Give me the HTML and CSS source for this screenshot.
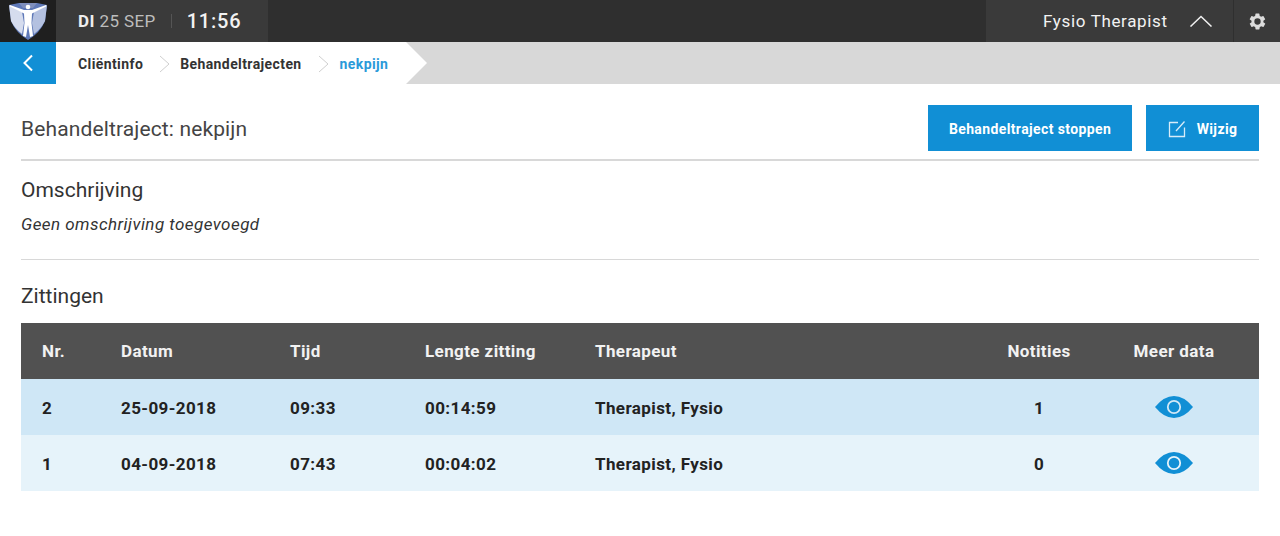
FILE: index.html
```html
<!DOCTYPE html>
<html lang="nl">
<head>
<meta charset="UTF-8" />
<meta name="viewport" content="width=device-width, initial-scale=1" />
<title>Behandeltraject: nekpijn</title>
<link rel="stylesheet" href="styles.css">
</head>
<body>
  <header class="topbar">
    <div class="logo">
      <svg width="38" height="37" viewBox="0 0 38 37">
        <path d="M0 2 L10 0 L28 0 L38 2 L36 18 Q31 30 19 37 Q7 30 2 18 Z" fill="#5f79b8"/>
        <path d="M0 2 L13 9 L15 20 L13 31 Q6 26 2 18 Z" fill="#d5dcee"/>
        <path d="M38 2 L25 9 L23 20 L25 31 Q32 26 36 18 Z" fill="#b4c1e0"/>
        <path d="M10 0 L28 0 L24 5 L14 5 Z" fill="#7f8fbd"/>
        <circle cx="19" cy="4" r="2.300" fill="#fff"/>
        <path d="M1 2 L15 7 L23 7 L37 2 L37 3.500 L23 10.500 L22.500 20 L24 33 L21 34 L19 22 L17 34 L14 33 L15.500 20 L15 10.500 L1 3.500 Z" fill="#fff"/>
      </svg>
    </div>
    <div class="clock">
      <span class="date"><b>DI</b> 25 SEP</span>
      <span class="time">11:56</span>
    </div>
    <div class="spacer"></div>
    <div class="user">
      <span>Fysio Therapist</span>
      <svg width="24" height="12" viewBox="0 0 24 12"><path d="M1.5 11.5 L12 1.5 L22.500 11.5" fill="none" stroke="#f0f0f0" stroke-width="1.500"/></svg>
    </div>
    <div class="settings">
      <svg width="19" height="19" viewBox="0 0 24 24"><path fill="#dcdcdc" fill-rule="evenodd" d="M19.4 13a7.600 7.600 0 0 0 0-2l2.100-1.600a.5.5 0 0 0 .1-.6l-2-3.500a.5.5 0 0 0-.6-.2l-2.500 1a7.500 7.500 0 0 0-1.700-1L14.400 2.400a.5.5 0 0 0-.5-.4h-4a.5.5 0 0 0-.5.4L9 5.100a7.500 7.500 0 0 0-1.700 1l-2.500-1a.5.5 0 0 0-.6.2l-2 3.500a.5.5 0 0 0 .1.600L4.500 11a7.600 7.600 0 0 0 0 2l-2.100 1.600a.5.5 0 0 0-.1.6l2 3.500a.5.5 0 0 0 .6.2l2.500-1a7.500 7.500 0 0 0 1.700 1l.4 2.700a.5.5 0 0 0 .5.4h4a.5.5 0 0 0 .5-.4l.4-2.700a7.500 7.500 0 0 0 1.700-1l2.500 1a.5.5 0 0 0 .6-.2l2-3.500a.5.5 0 0 0-.1-.6zM12 16a4 4 0 1 1 0-8 4 4 0 0 1 0 8z"/></svg>
    </div>
  </header>

  <nav class="crumbbar">
    <a class="back">
      <svg width="12" height="18" viewBox="0 0 12 18"><path d="M10 1.500 L2.500 9 L10 16.500" fill="none" stroke="#fff" stroke-width="2"/></svg>
    </a>
    <div class="crumbs">
      <span>Cliëntinfo</span>
      <svg class="sep" width="11" height="18" viewBox="0 0 11 18"><path d="M1 1 L10 9 L1 17" fill="none" stroke="#cfcfcf" stroke-width="1"/></svg>
      <span>Behandeltrajecten</span>
      <svg class="sep" width="11" height="18" viewBox="0 0 11 18"><path d="M1 1 L10 9 L1 17" fill="none" stroke="#cfcfcf" stroke-width="1"/></svg>
      <span class="current">nekpijn</span>
    </div>
  </nav>

  <main class="content">
    <div class="title-row">
      <h1>Behandeltraject: nekpijn</h1>
      <div class="actions">
        <button class="btn btn-stop">Behandeltraject stoppen</button>
        <button class="btn btn-edit">
          <svg width="18" height="18" viewBox="0 0 18 18"><path d="M10 2.500 H1.500 V16.500 H16.500 V7.500 M8 11 L16.500 1.500" fill="none" stroke="#d7ecf9" stroke-width="1.300"/></svg>
          Wijzig
        </button>
      </div>
    </div>

    <section class="description">
      <h2>Omschrijving</h2>
      <p>Geen omschrijving toegevoegd</p>
    </section>

    <h2 class="sessions-title">Zittingen</h2>
    <table class="sessions">
      <thead>
        <tr>
          <th class="c-nr">Nr.</th>
          <th class="c-date">Datum</th>
          <th class="c-time">Tijd</th>
          <th class="c-length">Lengte zitting</th>
          <th>Therapeut</th>
          <th class="c-notes">Notities</th>
          <th class="c-more">Meer data</th>
        </tr>
      </thead>
      <tbody>
        <tr>
          <td>2</td><td>25-09-2018</td><td>09:33</td><td>00:14:59</td><td>Therapist, Fysio</td>
          <td class="c-notes">1</td>
          <td class="c-more"><svg class="eye" width="38" height="22" viewBox="0 0 38 22"><path fill="#118fd5" fill-rule="evenodd" d="M0 11 Q9 0 19 0 Q29 0 38 11 Q29 22 19 22 Q9 22 0 11Z"/><circle cx="19" cy="11" r="6.200" fill="none" stroke="#d2e8f6" stroke-width="1.800"/></svg></td>
        </tr>
        <tr>
          <td>1</td><td>04-09-2018</td><td>07:43</td><td>00:04:02</td><td>Therapist, Fysio</td>
          <td class="c-notes">0</td>
          <td class="c-more"><svg class="eye" width="38" height="22" viewBox="0 0 38 22"><path fill="#118fd5" fill-rule="evenodd" d="M0 11 Q9 0 19 0 Q29 0 38 11 Q29 22 19 22 Q9 22 0 11Z"/><circle cx="19" cy="11" r="6.200" fill="none" stroke="#e6f3fa" stroke-width="1.800"/></svg></td>
        </tr>
      </tbody>
    </table>
  </main>
</body>
</html>
```

FILE: styles.css
```css
body {
  font-family: Roboto, 'Liberation Sans', sans-serif;
  background: #fff;
  color: #333;
  margin: 0;
}
.topbar {
  display: flex;
  height: 42px;
  background: #2f2f2f;
  color: #f2f2f2;
}
.logo {
  width: 56px;
  background: #1f1f1f;
  display: flex;
  justify-content: center;
  padding-top: 3px;
  box-sizing: border-box;
}
.clock {
  width: 212px;
  background: #3a3a3a;
  display: flex;
  align-items: center;
  padding-left: 22px;
  box-sizing: border-box;
}
.date {
  font-size: 17px;
  letter-spacing: 0.4px;
  color: #bdbdbd;
  padding-right: 15px;
  border-right: 1px solid #555;
  line-height: 14px;
}
.date b {
  color: #eee;
  font-weight: 700;
}
.time {
  font-size: 20px;
  font-weight: 500;
  letter-spacing: 0.8px;
  margin-left: 15px;
}
.spacer {
  flex: 1;
}
.user {
  width: 247px;
  background: #3a3a3a;
  display: flex;
  align-items: center;
  gap: 21px;
  padding-left: 57px;
  box-sizing: border-box;
  font-size: 17px;
  letter-spacing: 0.65px;
}
.settings {
  width: 47px;
  background: #3a3a3a;
  border-left: 1px solid #2f2f2f;
  display: flex;
  align-items: center;
  justify-content: center;
  box-sizing: border-box;
}
.crumbbar {
  display: flex;
  height: 42px;
  background: #d8d8d8;
}
.back {
  width: 56px;
  background: #118fd5;
  display: flex;
  align-items: center;
  justify-content: center;
}
.crumbs {
  display: flex;
  align-items: center;
  width: 371px;
  padding: 2px 0 0 22px;
  box-sizing: border-box;
  background: #fff;
  clip-path: polygon(0 0, 350px 0, 100% 50%, 350px 100%, 0 100%);
  font-size: 14px;
  font-weight: 700;
  letter-spacing: 0.4px;
  color: #333;
}
.sep {
  margin: 0 10px 0 16px;
}
.current {
  color: #2a9ad9;
  margin-left: 1px;
}
.content {
  padding: 21px 21px 0;
}
.title-row {
  display: flex;
  justify-content: space-between;
  align-items: center;
  height: 46px;
  padding-bottom: 8px;
  border-bottom: 2px solid #d8d8d8;
}
h1 {
  font-size: 21px;
  font-weight: 400;
  letter-spacing: 0.13px;
  color: #444;
  margin: 0;
  padding-top: 1px;
}
h2 {
  font-size: 21px;
  font-weight: 400;
  color: #333;
  margin: 0;
}
.actions {
  display: flex;
  gap: 14px;
}
.btn {
  height: 46px;
  padding: 1px 0 0;
  background: #118fd5;
  border: none;
  color: #fff;
  font-family: inherit;
  font-size: 14px;
  font-weight: 700;
  letter-spacing: 0.38px;
  display: flex;
  align-items: center;
  justify-content: center;
}
.btn-stop {
  width: 204px;
}
.btn-edit {
  width: 113px;
  gap: 11px;
}
.description {
  padding: 17px 0 25px;
  border-bottom: 1px solid #d8d8d8;
}
.description p {
  font-size: 17px;
  font-style: italic;
  letter-spacing: 0.45px;
  color: #333;
  margin: 12px 0 0;
}
.sessions-title {
  margin: 24px 0 15px;
}
.sessions {
  width: 100%;
  border-collapse: collapse;
  font-size: 17px;
  font-weight: 700;
  letter-spacing: 0.4px;
  table-layout: fixed;
}
.sessions th {
  background: #515151;
  color: #f2f2f2;
  text-align: left;
  height: 56px;
  padding: 0 0 0 21px;
  box-sizing: border-box;
}
.sessions td {
  height: 56px;
  padding: 1px 0 0 21px;
  box-sizing: border-box;
  color: #222;
}
.sessions tbody tr:nth-child(1) {
  background: #cfe7f6;
}
.sessions tbody tr:nth-child(2) {
  background: #e6f3fa;
}
.c-nr { width: 79px; }
.c-date { width: 169px; }
.c-time { width: 135px; }
.c-length { width: 170px; }
.sessions .c-notes {
  width: 100px;
  padding-left: 0;
  text-align: center;
}
.sessions .c-more {
  width: 170px;
  padding: 0;
  text-align: center;
}
.eye {
  display: block;
  margin: 0 auto;
}
```
